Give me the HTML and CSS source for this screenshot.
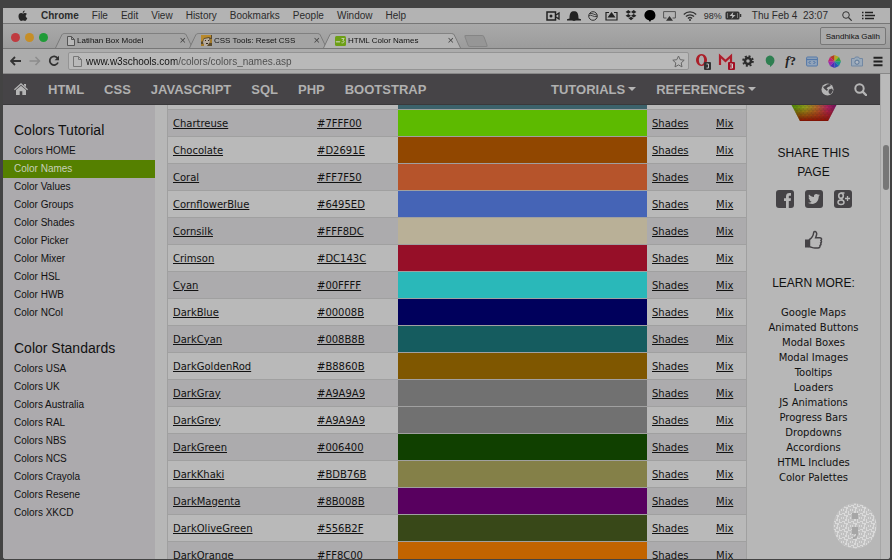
FILE: index.html
```html
<!DOCTYPE html>
<html lang="en">
<head>
<meta charset="utf-8">
<title>HTML Color Names</title>
<link rel="stylesheet" href="styles.css">
</head>
<body>
<div class="screen">
  <header class="menubar">
    <nav class="menus" aria-label="Application menu">
      <svg class="apple" width="10" height="12" viewBox="0 0 10 12"><path d="M6.6 0.4C6.7 1.6 5.7 2.8 4.7 2.8 4.6 1.7 5.6 0.6 6.6 0.4ZM8.9 4C8 4.600 7.700 5.200 7.700 6 7.700 7 8.400 7.700 9.300 8 8.900 9.500 7.900 11 6.900 11 6.200 11 5.900 10.600 5.100 10.600 4.200 10.600 3.900 11 3.200 11 2 11 0.500 8.500 0.500 6.300 0.500 4.300 1.700 3.100 3.100 3.100 3.900 3.100 4.500 3.600 5 3.600 5.500 3.600 6.200 3 7.100 3 7.900 3 8.500 3.400 8.900 4Z" fill="#262626"/></svg>
      <strong>Chrome</strong><span>File</span><span>Edit</span><span>View</span><span>History</span><span>Bookmarks</span><span>People</span><span>Window</span><span>Help</span>
    </nav>
    <div class="status">
      <svg width="14" height="10" viewBox="0 0 14 10"><path d="M1 1h8.500v8H1z" fill="none" stroke="#222" stroke-width="1.500"/><circle cx="5" cy="5" r="1.500" fill="#222"/><path d="M10 4l3-2v6l-3-2" fill="none" stroke="#222" stroke-width="1.300"/></svg>
      <svg width="14" height="10" viewBox="0 0 14 10"><path d="M2.500 7.500C2.500 2 4 0.300 7 0.300S11.500 2 11.500 7.500L14 8.300V9.500H9L7 10 5 9.500H0V8.300Z" fill="#222"/></svg>
      <svg width="10" height="10" viewBox="0 0 10 10"><circle cx="5" cy="5" r="4.300" fill="none" stroke="#333"/><path d="M1 4.500C3.500 3 5 6.500 9 5.500M2 2.500C5 2 6 4 9 4" fill="none" stroke="#333" stroke-width=".9"/></svg>
      <svg width="13" height="10" viewBox="0 0 13 10"><path d="M4 1.500H1v7.500h11V1.500H9" fill="none" stroke="#222" stroke-width="1.200"/><path d="M6.500 1L10.500 6.500h-8z" fill="#222"/></svg>
      <svg width="12" height="11" viewBox="0 0 12 11"><path d="M3.300 0L6 1.900 3.300 3.700 0.600 1.900ZM8.700 0L11.400 1.900 8.700 3.700 6 1.900ZM3.300 4L6 5.800 3.300 7.600 0.600 5.800ZM8.700 4L11.400 5.800 8.700 7.600 6 5.800ZM3.500 8.300L6 6.700 8.500 8.300 6 10.200Z" fill="#222"/></svg>
      <svg class="bubble" width="12" height="12" viewBox="0 0 12 12"><path d="M6 0a5.500 5.200 0 0 1 1 10.300L6 12 4.800 10.300A5.500 5.200 0 0 1 6 0Z" fill="#000"/></svg>
      <svg width="13" height="10" viewBox="0 0 13 10"><path d="M3.500 7H0.600V0.600h11.800V7H9.500" fill="none" stroke="#555"/><path d="M6.500 5L10 9.800H3z" fill="#333"/></svg>
      <svg width="14" height="10" viewBox="0 0 14 10"><path d="M0.800 3.500C4.300 0 9.700 0 13.200 3.500M2.900 5.500C5.200 3.200 8.800 3.200 11.100 5.500M4.900 7.400C6.200 6.300 7.800 6.300 9.100 7.400" fill="none" stroke="#333" stroke-width="1.300"/><circle cx="7" cy="9" r="1" fill="#333"/></svg>
      <span class="battery">98%</span>
      <svg class="cell" width="17" height="9" viewBox="0 0 17 9"><rect x=".5" y=".5" width="14" height="8" rx="1.500" fill="#333"/><path d="M15.500 3v3" stroke="#333" stroke-width="1.500"/><path d="M8.300 1L4.500 5h2.800l-.8 3L10.500 4H7.800z" fill="#bbb"/><path d="M2.500 2v5M12.500 2v5" stroke="#999" stroke-width=".7"/></svg>
      <span class="clock">Thu Feb 4&nbsp; 23:07</span>
      <svg class="spot" width="10" height="10" viewBox="0 0 10 10"><circle cx="4" cy="4" r="3.300" fill="none" stroke="#333"/><path d="M6.500 6.500L9.700 9.700" stroke="#333" stroke-width="1.200"/></svg>
      <svg class="list" width="13" height="9" viewBox="0 0 13 9"><path d="M0 1.500h1.500M0 4.500h1.500M0 7.500h1.500M3 1.500h8M3 4.500h10M3 7.500h9" stroke="#222" stroke-width="1.400"/></svg>
    </div>
  </header>

  <div class="tabstrip">
    <div class="lights"><i class="red"></i><i class="amber"></i><i class="green"></i></div>
    <div class="tabs">
      <div class="tab">
        <svg width="8" height="10" viewBox="0 0 8 10"><path d="M.5.500h4L7.500 3.500v6H.5zM4.500.500v3h3" fill="#b8b8b8" stroke="#555"/></svg>
        <span>Latihan Box Model</span><button aria-label="Close tab">×</button>
      </div>
      <div class="tab">
        <svg width="11" height="11" viewBox="0 0 11 11"><path d="M0 0h11v11H0z" fill="#5a4a2c"/><path d="M0 0h10v3L8 2 3 3 1 7 0 6z" fill="#b8892c"/><path d="M3 4l5-1 1 4-3 4H3L2 7z" fill="#b7aca0"/><path d="M4 5h1v1H4zM7 5h1v1H7zM5 8h2v1H5z" fill="#33291d"/><path d="M9 4h2v4H9zM0 9h3v2H0z" fill="#a37a2b"/></svg>
        <span>CSS Tools: Reset CSS</span><button aria-label="Close tab">×</button>
      </div>
      <div class="tab active">
        <svg width="11" height="10" viewBox="0 0 11 10"><rect width="11" height="10" rx="1.500" fill="#6d9f16"/><path d="M1 5l1 1.500L3 5l1 1.500L5 5M6.500 2.500h2.700L7.700 4.500C10 4.500 9.500 7.500 6.500 6.800" fill="none" stroke="#c8d2b2" stroke-width=".9"/></svg>
        <span>HTML Color Names</span><button aria-label="Close tab">×</button>
      </div>
      <button class="newtab" aria-label="New tab"></button>
    </div>
    <button class="profile">Sandhika Galih</button>
  </div>

  <div class="toolbar">
    <div class="history">
      <button aria-label="Back"><svg width="12" height="10" viewBox="0 0 12 10"><path d="M11 5H1.500M5 1L1 5l4 4" fill="none" stroke="#333" stroke-width="1.800"/></svg></button>
      <button aria-label="Forward"><svg width="12" height="10" viewBox="0 0 12 10"><path d="M.5 5H10M6.500 1l4 4-4 4" fill="none" stroke="#8c8c8c" stroke-width="1.500"/></svg></button>
      <button aria-label="Reload"><svg width="12" height="12" viewBox="0 0 12 12"><path d="M9.600 3.300A4.300 4.300 0 1 0 10 7.500" fill="none" stroke="#333" stroke-width="1.800"/><path d="M11 .8v4.400H6.600z" fill="#333"/></svg></button>
    </div>
    <div class="address">
      <svg width="9" height="11" viewBox="0 0 9 11"><path d="M.5.500h5L8.500 3.500v7H.5zM5.500.500v3h3" fill="none" stroke="#777"/></svg>
      <input aria-label="Address" type="text" value="www.w3schools.com/colors/colors_names.asp">
      <svg width="13" height="13" viewBox="0 0 13 13"><path d="M6.500 1l1.700 3.700 4 .5-3 2.700.8 4-3.500-2-3.500 2 .8-4-3-2.700 4-.5z" fill="none" stroke="#666"/></svg>
    </div>
    <div class="extensions">
      <svg class="badged" width="17" height="17" viewBox="0 0 17 17"><path fill-rule="evenodd" d="M6.500 1a5.500 6 0 1 0 .01 0ZM6.500 2.500a2.600 4.600 0 1 1-.01 0Z" fill="#ab1e28"/><rect x="9" y="9" width="7" height="8" rx="1" fill="#333"/><path d="M11.500 11h2v4h-2" fill="none" stroke="#bbb"/></svg>
      <svg class="badged" width="18" height="17" viewBox="0 0 18 17"><path d="M1 2h13v10H1z" fill="#b8a8a8"/><path d="M2 12V3l5.500 5L13 3v9" fill="none" stroke="#ad1e2c" stroke-width="2.200"/><rect x="10" y="9" width="7" height="8" rx="1" fill="#a30f24"/><path d="M12 11h2.500v4H12M12.500 13h2" fill="none" stroke="#ccc"/></svg>
      <svg width="12" height="12" viewBox="0 0 12 12"><circle cx="6" cy="6" r="3" fill="none" stroke="#2b2b2b" stroke-width="2.500"/><circle cx="6" cy="6" r="4.900" fill="none" stroke="#2b2b2b" stroke-width="1.800" stroke-dasharray="2 1.850"/></svg>
      <svg width="11" height="12" viewBox="0 0 11 12"><path d="M5.500.500a5 5 0 0 1 5 5C10.500 8.500 8 10.500 6 12V10.300A5 5 0 0 1 5.500.500Z" fill="#2e7f51"/></svg>
      <span class="whatfont"><i>f</i>?</span>
      <svg width="12" height="11" viewBox="0 0 12 11"><rect x=".6" y="1" width="10.800" height="9" rx="1" fill="#91a3b9" stroke="#5378a8"/><path d="M.5 3.500h11" stroke="#5378a8" stroke-width="1.200"/><path d="M4.500 5L3 6.500 4.500 8M7.500 5L9 6.500 7.500 8" fill="none" stroke="#426ba0"/></svg>
      <svg width="13" height="13" viewBox="0 0 13 13"><path d="M6.500 6.500V0L2 2z" fill="#b73a20"/><path d="M6.500 6.500V0L11 2z" fill="#b3a91f"/><path d="M6.500 6.500L11 2l2 4.500z" fill="#3aa33a"/><path d="M6.500 6.500H13L11 11z" fill="#18958f"/><path d="M6.500 6.500L11 11l-4.500 2z" fill="#2459b9"/><path d="M6.500 6.500V13L2 11z" fill="#4b31b5"/><path d="M6.500 6.500L2 11 0 6.500z" fill="#9b29b0"/><path d="M6.500 6.500H0L2 2z" fill="#c0246e"/></svg>
      <svg width="12" height="11" viewBox="0 0 12 11"><path d="M.5 2.500h3l1-1.500h3l1 1.500h3V10H.5z" fill="#99a9ba" stroke="#7288a3"/><circle cx="6" cy="6.200" r="2.100" fill="#b0b8c2" stroke="#5b7697"/></svg>
      <svg width="10" height="11" viewBox="0 0 10 11"><path d="M.5 1.800h9M.5 5.500h9M.5 9.200h9" stroke="#222" stroke-width="2"/></svg>
    </div>
  </div>

  <div class="viewport">
    <div class="page">
      <nav class="topnav">
        <a href="#" aria-label="Home"><svg width="14" height="12" viewBox="0 0 14 12"><path d="M7 0L14 6.300l-.8.9L7 1.800.8 7.200 0 6.300ZM10 1h2v3l-2-1.800Z" fill="#b5b5b5"/><path d="M7 2.800L12 7.100V12H8.300V8.300H5.700V12H2V7.100Z" fill="#b5b5b5"/></svg></a>
        <a href="#">HTML</a><a href="#">CSS</a><a href="#">JAVASCRIPT</a><a href="#">SQL</a><a href="#">PHP</a><a href="#">BOOTSTRAP</a>
        <a href="#" class="drop push">TUTORIALS</a><a href="#" class="drop">REFERENCES</a>
        <a href="#" class="globe" aria-label="Translate"><svg width="13" height="13" viewBox="0 0 13 13"><circle cx="6.500" cy="6.500" r="6" fill="#b5b5b5"/><path d="M6 1.500L8.500 1l1.500 1-1.500 1.500L7 4 5.500 5.500 7 6.500 6 8 3.500 6 2 4 4 3ZM8 6.500l3-1 1 2-2 3.500-2-.5L7.500 8.500Z" fill="#464447"/></svg></a>
        <a href="#" aria-label="Search"><svg width="13" height="13" viewBox="0 0 13 13"><circle cx="5.500" cy="5.500" r="4.200" fill="none" stroke="#b5b5b5" stroke-width="2"/><path d="M8.600 8.600L12 12" stroke="#b5b5b5" stroke-width="2.400" stroke-linecap="round"/></svg></a>
      </nav>
      <div class="content">
        <aside class="sidebar">
          <h2>Colors Tutorial</h2>
          <a href="#">Colors HOME</a><a href="#" class="current">Color Names</a><a href="#">Color Values</a><a href="#">Color Groups</a><a href="#">Color Shades</a><a href="#">Color Picker</a><a href="#">Color Mixer</a><a href="#">Color HSL</a><a href="#">Color HWB</a><a href="#">Color NCol</a>
          <h2>Color Standards</h2>
          <a href="#">Colors USA</a><a href="#">Colors UK</a><a href="#">Colors Australia</a><a href="#">Colors RAL</a><a href="#">Colors NBS</a><a href="#">Colors NCS</a><a href="#">Colors Crayola</a><a href="#">Colors Resene</a><a href="#">Colors XKCD</a>
        </aside>
        <main>
          <table>
            <colgroup><col class="c-name"><col class="c-hex"><col class="c-swatch"><col class="c-shades"><col class="c-mix"></colgroup>
            <tbody>
            <tr class="clipped"><td></td><td></td><td class="cadetblue"></td><td></td><td></td></tr>
            <tr><td><a href="#">Chartreuse</a></td><td><a href="#">#7FFF00</a></td><td class="chartreuse"></td><td><a href="#">Shades</a></td><td><a href="#">Mix</a></td></tr>
            <tr><td><a href="#">Chocolate</a></td><td><a href="#">#D2691E</a></td><td class="chocolate"></td><td><a href="#">Shades</a></td><td><a href="#">Mix</a></td></tr>
            <tr><td><a href="#">Coral</a></td><td><a href="#">#FF7F50</a></td><td class="coral"></td><td><a href="#">Shades</a></td><td><a href="#">Mix</a></td></tr>
            <tr><td><a href="#">CornflowerBlue</a></td><td><a href="#">#6495ED</a></td><td class="cornflower"></td><td><a href="#">Shades</a></td><td><a href="#">Mix</a></td></tr>
            <tr><td><a href="#">Cornsilk</a></td><td><a href="#">#FFF8DC</a></td><td class="cornsilk"></td><td><a href="#">Shades</a></td><td><a href="#">Mix</a></td></tr>
            <tr><td><a href="#">Crimson</a></td><td><a href="#">#DC143C</a></td><td class="crimson"></td><td><a href="#">Shades</a></td><td><a href="#">Mix</a></td></tr>
            <tr><td><a href="#">Cyan</a></td><td><a href="#">#00FFFF</a></td><td class="cyan"></td><td><a href="#">Shades</a></td><td><a href="#">Mix</a></td></tr>
            <tr><td><a href="#">DarkBlue</a></td><td><a href="#">#00008B</a></td><td class="darkblue"></td><td><a href="#">Shades</a></td><td><a href="#">Mix</a></td></tr>
            <tr><td><a href="#">DarkCyan</a></td><td><a href="#">#008B8B</a></td><td class="darkcyan"></td><td><a href="#">Shades</a></td><td><a href="#">Mix</a></td></tr>
            <tr><td><a href="#">DarkGoldenRod</a></td><td><a href="#">#B8860B</a></td><td class="darkgoldenrod"></td><td><a href="#">Shades</a></td><td><a href="#">Mix</a></td></tr>
            <tr><td><a href="#">DarkGray</a></td><td><a href="#">#A9A9A9</a></td><td class="darkgray"></td><td><a href="#">Shades</a></td><td><a href="#">Mix</a></td></tr>
            <tr><td><a href="#">DarkGrey</a></td><td><a href="#">#A9A9A9</a></td><td class="darkgray"></td><td><a href="#">Shades</a></td><td><a href="#">Mix</a></td></tr>
            <tr><td><a href="#">DarkGreen</a></td><td><a href="#">#006400</a></td><td class="darkgreen"></td><td><a href="#">Shades</a></td><td><a href="#">Mix</a></td></tr>
            <tr><td><a href="#">DarkKhaki</a></td><td><a href="#">#BDB76B</a></td><td class="darkkhaki"></td><td><a href="#">Shades</a></td><td><a href="#">Mix</a></td></tr>
            <tr><td><a href="#">DarkMagenta</a></td><td><a href="#">#8B008B</a></td><td class="darkmagenta"></td><td><a href="#">Shades</a></td><td><a href="#">Mix</a></td></tr>
            <tr><td><a href="#">DarkOliveGreen</a></td><td><a href="#">#556B2F</a></td><td class="darkolive"></td><td><a href="#">Shades</a></td><td><a href="#">Mix</a></td></tr>
            <tr><td><a href="#">DarkOrange</a></td><td><a href="#">#FF8C00</a></td><td class="darkorange"></td><td><a href="#">Shades</a></td><td><a href="#">Mix</a></td></tr>
            </tbody>
          </table>
        </main>
        <aside class="rail">
          <svg class="hexagon" width="46" height="16" viewBox="0 1 46 16">
            <defs>
              <linearGradient id="hue"><stop offset="0" stop-color="#4a8a00"/><stop offset=".3" stop-color="#92a01a"/><stop offset=".55" stop-color="#b36a28"/><stop offset=".8" stop-color="#b01f60"/><stop offset="1" stop-color="#70105c"/></linearGradient>
              <linearGradient id="warm" x2="0" y2="1"><stop offset=".2" stop-color="#a02000" stop-opacity="0"/><stop offset="1" stop-color="#8a0f00"/></linearGradient>
              <pattern id="cells" width="4" height="4" patternUnits="userSpaceOnUse"><path d="M0 0h4M0 2h4M0 0v2M2 2v2" stroke="#222" stroke-opacity=".3" stroke-width=".6"/></pattern>
            </defs>
            <path d="M0 0h46L37 17H9z" fill="url(#hue)"/><path d="M0 0h46L37 17H9z" fill="url(#warm)"/><path d="M0 0h46L37 17H9z" fill="url(#cells)"/>
          </svg>
          <h3>SHARE THIS<br>PAGE</h3>
          <div class="share">
            <a href="#" aria-label="Facebook"><svg width="18" height="18" viewBox="0 0 18 18"><rect width="18" height="18" rx="3" fill="#454346"/><path d="M10 18v-7H8V8.300h2V6.500C10 4 11.300 3 13.400 3H15v2.700h-1.200C13 5.700 12.800 6 12.800 6.800v1.500H15L14.700 11h-1.900v7z" fill="#b7b7b7"/></svg></a>
            <a href="#" aria-label="Twitter"><svg width="18" height="18" viewBox="0 0 18 18"><rect width="18" height="18" rx="3" fill="#454346"/><path d="M15 5.200l-1.300 1.400C13.700 11 11 14 7.300 14 5.500 14 4 13.500 3 12.800c1.500.1 2.700-.3 3.700-1.100-1.100-.1-1.800-.7-2.200-1.600h1C4.300 9.600 3.600 8.700 3.600 7.500l1.100.3C3.600 7 3.400 5.600 4 4.500 5.300 6 7 7 9 7.100 8.500 5.200 9.900 4 11.300 4c.7 0 1.300.3 1.800.8L14.600 4.200 13.700 5.500z" fill="#b7b7b7"/></svg></a>
            <a href="#" aria-label="Google Plus"><svg width="18" height="18" viewBox="0 0 18 18"><rect width="18" height="18" rx="3" fill="#454346"/><ellipse cx="7" cy="5.800" rx="2.300" ry="2.600" fill="none" stroke="#b7b7b7" stroke-width="1.600"/><ellipse cx="7" cy="12.300" rx="3" ry="2.300" fill="none" stroke="#b7b7b7" stroke-width="1.500"/><path d="M6.500 3h4M7 8.300l1.500 1.800" stroke="#b7b7b7" stroke-width="1.300"/><path d="M11 8.500h5M13.500 6v5" stroke="#b7b7b7" stroke-width="1.300"/></svg></a>
          </div>
          <a class="like" href="#" aria-label="Like"><svg width="19" height="20" viewBox="0 0 19 20"><path d="M5.500 9.500C8 8 9.300 5.500 9.700 2.500 10 .8 12.500 1 12.700 3.500 12.800 5 12 6.500 11.600 7.800H16C17.700 7.800 18 9.600 17 10.400 17.800 11.300 17.500 12.600 16.700 13 17.200 14 16.800 15.100 16 15.500 16.300 17 15.500 18 14 18H11C8.500 18 7.500 17 5.500 16.800Z" fill="none" stroke="#454346" stroke-width="1.500"/><path d="M1 9.500h4V17.500H1z" fill="#454346"/></svg></a>
          <h3>LEARN MORE:</h3>
          <div class="more">
            <a href="#">Google Maps</a><a href="#">Animated Buttons</a><a href="#">Modal Boxes</a><a href="#">Modal Images</a><a href="#">Tooltips</a><a href="#">Loaders</a><a href="#">JS Animations</a><a href="#">Progress Bars</a><a href="#">Dropdowns</a><a href="#">Accordions</a><a href="#">HTML Includes</a><a href="#">Color Palettes</a>
          </div>
        </aside>
      </div>
    </div>
    <div class="scrollbar"><div class="thumb"></div></div>
  </div>
  <svg class="watermark" width="44" height="46" viewBox="0 0 44 46">
    <defs><pattern id="code" width="9" height="8" patternUnits="userSpaceOnUse"><path d="M0 1h3M5 1h1M8 0v3M1 3v3M3 3h3M6 5h3M3 5v3M5 7h3M0 7h1" stroke="#a2a2a2" stroke-width=".9"/></pattern></defs>
    <ellipse cx="22" cy="23" rx="21.500" ry="22.500" fill="#dadada"/>
    <ellipse cx="22" cy="23" rx="21.500" ry="22.500" fill="url(#code)"/>
    <path d="M19 10h6v6h-6zM19 24h6v7c0 3-2 5-5 5v-2c2 0 3-1 3-3h-4z" fill="#a6a6a6"/>
  </svg>
</div>
</body>
</html>
```
FILE: styles.css
```css
* { box-sizing: border-box; }

body {
  margin: 0;
  background: #434343;
  color: #111;
  font-family: "Liberation Sans", Arial, sans-serif;
  font-size: 10px;
}

a { color: inherit; text-decoration: none; }
svg { display: block; flex: none; }

button {
  border: 0;
  padding: 0;
  background: none;
  font: inherit;
  color: inherit;
}

.screen {
  position: relative;
  display: flex;
  flex-direction: column;
  height: 100vh;
  padding: 8px 2px 1px 3px;
  overflow: hidden;
}

/* System menu bar */
.menubar {
  flex: none;
  display: flex;
  justify-content: space-between;
  align-items: center;
  height: 16px;
  padding: 0 15px;
  background: #b3b3b3;
  border-bottom: 1px solid #777;
  color: #2b2b2b;
}

.menus, .status { display: flex; align-items: center; }
.menus { gap: 13px; }
.status { gap: 7px; }
.battery { font-size: 9px; }
.cell { margin-left: -4px; }
.clock, .list { margin-left: 3px; }
.spot { margin-left: 7px; }

/* Browser tabs */
.tabstrip {
  flex: none;
  display: flex;
  align-items: flex-end;
  height: 25px;
  padding: 0 4px 0 8px;
  background: linear-gradient(#a9a9a9, #9c9c9c);
  border-bottom: 1px solid #777;
  font-size: 8px;
}

.lights { display: flex; gap: 5px; padding-bottom: 6px; }
.lights i { width: 9px; height: 9px; border-radius: 50%; }
.red { background: #bf3b40; }
.amber { background: #c68e27; }
.green { background: #209b38; }

.tabs { flex: 1; display: flex; align-items: flex-end; padding-left: 7px; }

.tab {
  position: relative;
  z-index: 0;
  display: flex;
  align-items: center;
  gap: 2px;
  width: 134px;
  height: 17px;
  padding: 2px 3px 0 12px;
}

.tab::before {
  content: "";
  position: absolute;
  z-index: -1;
  inset: 0 -4px 0 0;
  border: 1px solid #777;
  border-bottom: 0;
  border-radius: 3px 3px 0 0;
  background: #a4a4a4;
  transform: perspective(20px) rotateX(8deg);
  transform-origin: bottom;
}

.tab.active::before { background: #b3b3b3; }
.tab.active { z-index: 1; }
.tab span { flex: 1; white-space: nowrap; }
.tab button { font-size: 11px; line-height: 11px; color: #444; }
.newtab {
  width: 20px;
  height: 12px;
  margin: 0 0 1px 9px;
  border: 1px solid #858585;
  border-radius: 2px;
  background: #969696;
  transform: skewX(20deg);
}

.profile {
  align-self: center;
  height: 18px;
  padding: 0 5px;
  border: 1px solid #777;
  border-radius: 2px;
  background: #a9a9a9;
}

/* Address bar */
.toolbar {
  flex: none;
  display: flex;
  align-items: center;
  height: 25px;
  padding: 0 7px;
  background: #acacac;
  border-bottom: 1px solid #888;
}

.history { display: flex; align-items: center; gap: 7px; }

.address {
  flex: 1;
  display: flex;
  align-items: center;
  gap: 4px;
  height: 18px;
  margin: 0 6px 0 8px;
  padding: 0 3px 0 4px;
  border: 1px solid #949494;
  border-radius: 2px;
  background: #b9b9b9;
}

.address input {
  flex: 1;
  min-width: 0;
  border: 0;
  padding: 0;
  outline: 0;
  font: inherit;
  color: transparent;
  background: linear-gradient(90deg, #111 91px, #4c4c4c 91px);
  -webkit-background-clip: text;
  background-clip: text;
}

.extensions { display: flex; align-items: center; gap: 10px; }
.badged { margin-right: -4px; }
.whatfont { font: bold 13px "Liberation Serif", serif; color: #222; }

/* Page */
.viewport { flex: 1; display: flex; min-height: 0; background: #b7b7b7; border-radius: 0 0 3px 3px; overflow: hidden; }
.page { flex: 1; display: flex; flex-direction: column; min-width: 0; }

.topnav {
  flex: none;
  display: flex;
  align-items: center;
  gap: 20px;
  height: 31px;
  padding: 0 13px 0 11px;
  background: #464447;
  border-bottom: 1px solid #3a393b;
  color: #b0b0b0;
  font-size: 13px;
  font-weight: bold;
}

.push { margin-left: auto; }
.globe { margin-left: 45px; }
.drop { display: flex; align-items: center; gap: 3px; }
.drop::after {
  content: "";
  border: 4px solid transparent;
  border-top-color: #b5b5b5;
  border-bottom: 0;
}

.content {
  flex: 1;
  display: grid;
  grid-template-columns: 152px 1fr 133px;
  min-height: 0;
  overflow: hidden;
}

.sidebar { padding-top: 13px; background: #acaaad; }
.sidebar h2 {
  margin: 0;
  padding-left: 11px;
  font-size: 14px;
  font-weight: normal;
  line-height: 24px;
}
.sidebar a { display: block; padding-left: 11px; line-height: 18px; }
.sidebar a + h2 { margin-top: 14px; }
.sidebar .current { background: #558000; color: #c8d0ba; }

main { padding-left: 12px; }

table {
  width: 100%;
  table-layout: fixed;
  border-collapse: separate;
  border-spacing: 0;
  border: 1px solid #a0a0a0;
  border-width: 0 1px;
  font-family: "DejaVu Sans", Verdana, sans-serif;
  font-size: 10px;
}

.c-name { width: 144px; }
.c-hex { width: 86px; }
.c-shades { width: 64px; }
.c-mix { width: 35px; }

td { height: 27px; padding: 0 0 0 5px; border-bottom: 1px solid #a0a0a0; white-space: nowrap; }
tr { background: #b9b9b9; }
tr:nth-child(even) { background: #acabad; }
td a { text-decoration: underline; }
.clipped td { height: 5px; }

.cadetblue { background: #3c626b; }
.chartreuse { background: #5dba00; }
.chocolate { background: #914700; }
.coral { background: #b6542b; }
.cornflower { background: #4564b6; }
.cornsilk { background: #b9b097; }
.crimson { background: #960f28; }
.cyan { background: #2ab8b9; }
.darkblue { background: #00005c; }
.darkcyan { background: #155c5f; }
.darkgoldenrod { background: #7f5700; }
.darkgray { background: #717171; }
.darkgreen { background: #104000; }
.darkkhaki { background: #848048; }
.darkmagenta { background: #58005f; }
.darkolive { background: #384818; }
.darkorange { background: #c26400; }

.rail { display: flex; flex-direction: column; align-items: center; text-align: center; }
.rail h3 { margin: 0; font-size: 12px; font-weight: normal; line-height: 19px; }
.hexagon { margin-bottom: 23px; }
.share { display: flex; gap: 11px; padding: 8px 0 22px; }
.like { padding-bottom: 24px; }
.more { padding-top: 12px; font: 10px/15px "DejaVu Sans", Verdana, sans-serif; }
.more a { display: block; }

.scrollbar { flex: none; width: 10px; padding: 71px 2px 0; border-left: 1px solid #a6a6a6; background: #bababa; }
.thumb { width: 6px; height: 45px; border-radius: 3px; background: #777; }

.watermark { position: absolute; right: 15px; bottom: 11px; }
```
